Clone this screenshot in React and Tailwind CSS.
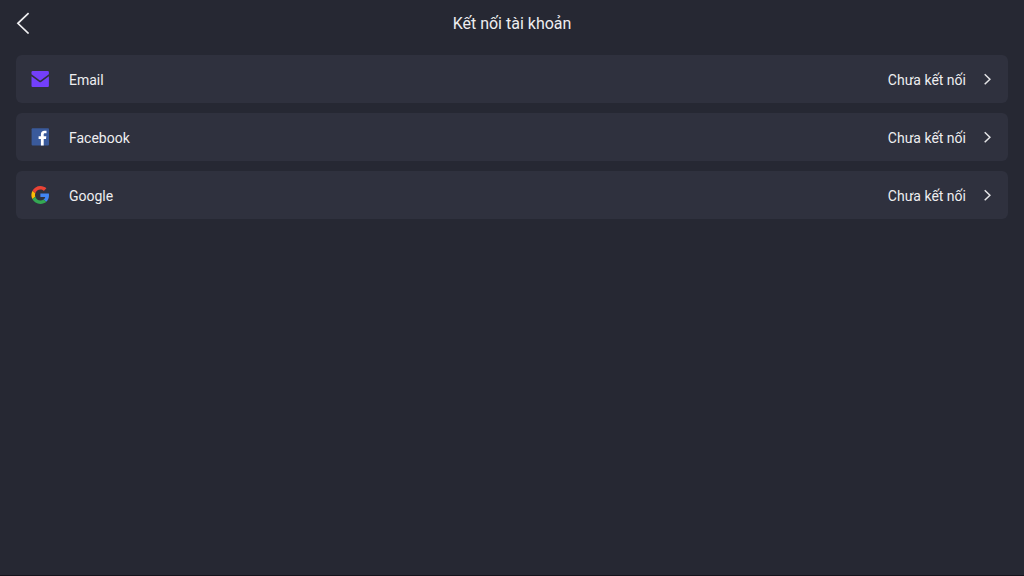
const EmailIcon = () => (
  <svg viewBox="0 0 18 18" className="w-[18px] h-[18px]" aria-hidden="true">
    <path
      fill="#733ffb"
      d="M0.5 4.2V2.2Q0.5 1.1 1.6 1.1H16.8Q17.9 1.1 17.9 2.2V4.2L9.8 10.2Q9.2 10.6 8.6 10.2Z"
    />
    <path
      fill="#733ffb"
      d="M0.5 6.2L8.3 11.9Q9.2 12.5 10.1 11.9L17.9 6.2V15.9Q17.9 17 16.8 17H1.6Q0.5 17 0.5 15.9Z"
    />
  </svg>
);

const FacebookIcon = () => (
  <svg viewBox="0 0 18 18" className="w-[18px] h-[18px]" aria-hidden="true">
    <rect x="0.6" y="0.2" width="17.4" height="17.4" rx="1" fill="#3a5a9b" />
    <path
      fill="#fff"
      d="M9.9 17.6V11H7.6V8.3H9.9V6.3C9.9 4 11.3 2.7 13.4 2.7C14.4 2.7 15.2 2.8 15.5 2.8V5.2H14C12.9 5.2 12.7 5.8 12.7 6.6V8.3H15.3L15 11H12.7V17.6Z"
    />
  </svg>
);

const GoogleIcon = () => (
  <svg viewBox="-1 0 48 48" className="w-[18px] h-[18px]" aria-hidden="true">
    <path
      fill="#EA4335"
      d="M24 9.5c3.54 0 6.71 1.22 9.21 3.6l6.85-6.85C35.9 2.38 30.47 0 24 0 14.62 0 6.51 5.38 2.56 13.22l7.98 6.19C12.43 13.72 17.74 9.5 24 9.5z"
    />
    <path
      fill="#4285F4"
      d="M46.98 24.55c0-1.57-.15-3.09-.38-4.55H24v9.02h12.94c-.58 2.96-2.26 5.48-4.78 7.18l7.73 6c4.51-4.18 7.09-10.36 7.09-17.65z"
    />
    <path
      fill="#FBBC05"
      d="M10.53 28.59c-.48-1.45-.76-2.99-.76-4.59s.27-3.14.76-4.59l-7.98-6.19C.92 16.46 0 20.12 0 24c0 3.88.92 7.54 2.56 10.78l7.97-6.19z"
    />
    <path
      fill="#34A853"
      d="M24 48c6.48 0 11.93-2.13 15.89-5.81l-7.73-6c-2.15 1.45-4.92 2.3-8.16 2.3-6.26 0-11.57-4.22-13.47-9.91l-7.98 6.19C6.51 42.62 14.62 48 24 48z"
    />
  </svg>
);

const accounts = [
  { name: "Email", Icon: EmailIcon },
  { name: "Facebook", Icon: FacebookIcon },
  { name: "Google", Icon: GoogleIcon },
];

const AccountRow = ({ name, Icon }) => {
  return (
    <li>
      <button
        type="button"
        className="flex items-center w-full h-12 pl-[15px] pr-4 rounded-md bg-[#2f313e] text-left text-sm cursor-pointer"
      >
        <span className="flex items-center justify-center w-[18px] mr-5 pb-px">
          <Icon />
        </span>
        <span className="flex-1 pt-px">{name}</span>
        <span className="pt-px">Chưa kết nối</span>
        <svg
          viewBox="0 0 10 14"
          className="w-[10px] h-[14px] ml-4 mb-px"
          fill="none"
          stroke="#e4e4e6"
          strokeWidth="1.5"
          aria-hidden="true"
        >
          <path d="M2.7 2.2L7.9 7.2L2.7 12.2" />
        </svg>
      </button>
    </li>
  );
};

const App = () => {
  return (
    <div className="min-h-screen bg-[#262833] border-b border-[#15131c] text-[#eeeef0] font-['Roboto','Noto_Sans',sans-serif]">
      <header className="grid grid-cols-[1fr_auto_1fr] items-center h-[46px] px-4">
        <button
          type="button"
          aria-label="Quay lại"
          className="justify-self-start cursor-pointer"
        >
          <svg
            viewBox="0 0 14 22"
            className="w-[14px] h-[22px]"
            fill="none"
            stroke="#f0f0f2"
            strokeWidth="1.7"
            aria-hidden="true"
          >
            <path d="M12.6 1.1L1.9 11.3L12.6 21.5" />
          </svg>
        </button>
        <h1 className="text-base pt-0.5">Kết nối tài khoản</h1>
      </header>
      <ul className="flex flex-col gap-[10px] px-4 pt-[9px]">
        {accounts.map((item) => (
          <AccountRow key={item.name} name={item.name} Icon={item.Icon} />
        ))}
      </ul>
    </div>
  );
};

export default App;
